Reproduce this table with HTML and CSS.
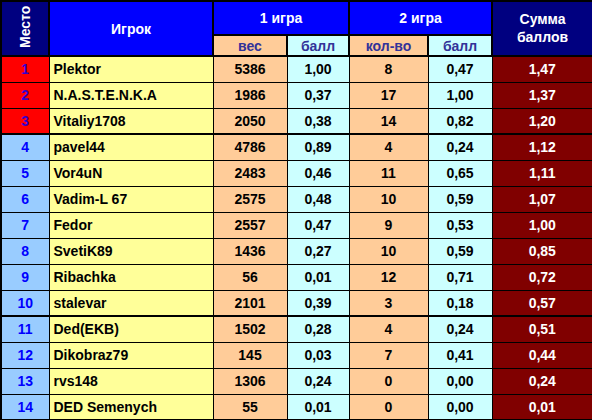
FILE: index.html
```html
<!DOCTYPE html>
<html lang="ru">
<head>
  <meta charset="UTF-8" />
  <title>Итоги</title>
  <link rel="stylesheet" href="styles.css">
</head>
<body>
  <table class="results">
    <colgroup>
      <col class="c-place">
      <col class="c-name">
      <col class="c-w1">
      <col class="c-p1">
      <col class="c-w2">
      <col class="c-p2">
      <col class="c-sum">
    </colgroup>
    <thead>
      <tr class="head-top">
        <th rowspan="2" class="h-place"><span class="vertical">Место</span></th>
        <th rowspan="2" class="h-blue">Игрок</th>
        <th colspan="2" class="h-blue">1 игра</th>
        <th colspan="2" class="h-blue">2 игра</th>
        <th rowspan="2" class="h-sum">Сумма<br>баллов</th>
      </tr>
      <tr class="head-sub">
        <th class="peach">вес</th>
        <th class="cyan">балл</th>
        <th class="peach">кол-во</th>
        <th class="cyan">балл</th>
      </tr>
    </thead>
    <tbody>
      <tr class="top3"><td class="place">1</td><td class="name">Plektor</td><td class="peach">5386</td><td class="cyan">1,00</td><td class="peach">8</td><td class="cyan">0,47</td><td class="sum">1,47</td></tr>
      <tr class="top3"><td class="place">2</td><td class="name">N.A.S.T.E.N.K.A</td><td class="peach">1986</td><td class="cyan">0,37</td><td class="peach">17</td><td class="cyan">1,00</td><td class="sum">1,37</td></tr>
      <tr class="top3 split"><td class="place">3</td><td class="name">Vitaliy1708</td><td class="peach">2050</td><td class="cyan">0,38</td><td class="peach">14</td><td class="cyan">0,82</td><td class="sum">1,20</td></tr>
      <tr><td class="place">4</td><td class="name">pavel44</td><td class="peach">4786</td><td class="cyan">0,89</td><td class="peach">4</td><td class="cyan">0,24</td><td class="sum">1,12</td></tr>
      <tr><td class="place">5</td><td class="name">Vor4uN</td><td class="peach">2483</td><td class="cyan">0,46</td><td class="peach">11</td><td class="cyan">0,65</td><td class="sum">1,11</td></tr>
      <tr><td class="place">6</td><td class="name">Vadim-L 67</td><td class="peach">2575</td><td class="cyan">0,48</td><td class="peach">10</td><td class="cyan">0,59</td><td class="sum">1,07</td></tr>
      <tr><td class="place">7</td><td class="name">Fedor</td><td class="peach">2557</td><td class="cyan">0,47</td><td class="peach">9</td><td class="cyan">0,53</td><td class="sum">1,00</td></tr>
      <tr><td class="place">8</td><td class="name">SvetiK89</td><td class="peach">1436</td><td class="cyan">0,27</td><td class="peach">10</td><td class="cyan">0,59</td><td class="sum">0,85</td></tr>
      <tr><td class="place">9</td><td class="name">Ribachka</td><td class="peach">56</td><td class="cyan">0,01</td><td class="peach">12</td><td class="cyan">0,71</td><td class="sum">0,72</td></tr>
      <tr class="split"><td class="place">10</td><td class="name">stalevar</td><td class="peach">2101</td><td class="cyan">0,39</td><td class="peach">3</td><td class="cyan">0,18</td><td class="sum">0,57</td></tr>
      <tr><td class="place">11</td><td class="name">Ded(EKB)</td><td class="peach">1502</td><td class="cyan">0,28</td><td class="peach">4</td><td class="cyan">0,24</td><td class="sum">0,51</td></tr>
      <tr><td class="place">12</td><td class="name">Dikobraz79</td><td class="peach">145</td><td class="cyan">0,03</td><td class="peach">7</td><td class="cyan">0,41</td><td class="sum">0,44</td></tr>
      <tr><td class="place">13</td><td class="name">rvs148</td><td class="peach">1306</td><td class="cyan">0,24</td><td class="peach">0</td><td class="cyan">0,00</td><td class="sum">0,24</td></tr>
      <tr><td class="place">14</td><td class="name">DED Semenych</td><td class="peach">55</td><td class="cyan">0,01</td><td class="peach">0</td><td class="cyan">0,00</td><td class="sum">0,01</td></tr>
    </tbody>
  </table>
</body>
</html>
```

FILE: styles.css
```css
* {
  margin: 0;
  padding: 0;
  box-sizing: border-box;
}

body {
  background: #ffffff;
  font-family: "Liberation Sans", Arial, sans-serif;
  font-weight: bold;
  font-size: 14px;
}

.results {
  width: 592px;
  border-collapse: collapse;
  table-layout: fixed;
  border: 2px solid #000;
}

.c-place { width: 48px; }
.c-name { width: 164px; }
.c-w1 { width: 74px; }
.c-p1 { width: 62px; }
.c-w2 { width: 79px; }
.c-p2 { width: 64px; }
.c-sum { width: 101px; }

th {
  border: 2px solid #000;
  color: #fff;
  text-align: center;
  font-weight: bold;
}

.head-top th {
  height: 34px;
}

.head-sub th {
  height: 21px;
  color: #333399;
}

.h-place {
  background: #000080;
  vertical-align: middle;
  padding-bottom: 3px;
}
.h-blue { background: #0000ff; }
.h-sum {
  background: #000080;
  line-height: 18px;
  padding-bottom: 2px;
}

.vertical {
  display: block;
  height: 44px;
  width: 18px;
  margin: 0 auto;
  writing-mode: vertical-rl;
  transform: rotate(180deg);
  text-align: center;
  font-size: 14px;
  line-height: 18px;
}

td {
  height: 26px;
  border: 1px solid #000;
  text-align: center;
  vertical-align: middle;
  color: #000;
}

.peach { background: #ffcc99; }
.cyan { background: #ccffff; }

.place {
  background: #99ccff;
  color: #0000ff;
}

.top3 .place {
  background: #ff0000;
  color: #3300cc;
}

.name {
  background: #ffff99;
  text-align: left;
  padding-left: 4px;
}

.sum {
  background: #800000;
  color: #fff;
}

.split td {
  border-bottom-width: 2px;
}
```
